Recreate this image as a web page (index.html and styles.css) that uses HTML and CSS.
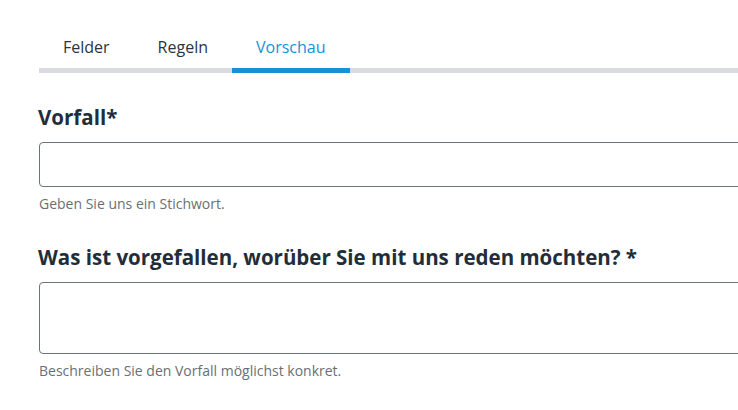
FILE: index.html
```html
<!DOCTYPE html>
<html lang="de">
<head>
    <meta charset="UTF-8">
    <meta name="viewport" content="width=device-width, initial-scale=1.0">
    <title>Formular Vorschau</title>
    <link rel="stylesheet" href="styles.css">
</head>
<body>
    <div class="page">
        <nav class="tabs">
            <a class="tab" href="#">Felder</a>
            <a class="tab" href="#">Regeln</a>
            <a class="tab active" href="#">Vorschau</a>
        </nav>

        <form class="preview">
            <div class="field">
                <label for="vorfall">Vorfall*</label>
                <input type="text" id="vorfall" name="vorfall">
                <p class="help">Geben Sie uns ein Stichwort.</p>
            </div>

            <div class="field">
                <label for="beschreibung">Was ist vorgefallen, worüber Sie mit uns reden möchten? *</label>
                <textarea id="beschreibung" name="beschreibung"></textarea>
                <p class="help">Beschreiben Sie den Vorfall möglichst konkret.</p>
            </div>
        </form>
    </div>
</body>
</html>
```

FILE: styles.css
```css
html, body {
    margin: 0;
    overflow: hidden;
}
body {
    font-family: "Open Sans", sans-serif;
    background: #fff;
    color: #222d3a;
}
.page {
    width: 760px;
    padding: 26px 0 0 39px;
}
.tabs {
    display: flex;
    border-bottom: 5px solid #d8dce0;
}
.tab {
    display: block;
    padding: 10px 24px 10px;
    margin-bottom: -5px;
    border-bottom: 5px solid transparent;
    font-size: 16px;
    line-height: 22px;
    color: #2b3440;
    text-decoration: none;
}
.tab.active {
    color: #1592d6;
    border-bottom-color: #1592d6;
}
.preview {
    padding-top: 31px;
}
.field {
    margin-bottom: 31px;
}
label {
    display: block;
    font-size: 20.5px;
    font-weight: 700;
    line-height: 26px;
    margin-left: -1px;
    margin-bottom: 12px;
}
input, textarea {
    display: block;
    box-sizing: border-box;
    width: 100%;
    border: 1px solid #6b7379;
    border-radius: 4px;
    background: #fff;
    font: inherit;
    resize: none;
}
input {
    height: 45px;
}
textarea {
    height: 72px;
}
.help {
    margin: 8px 0 0;
    font-size: 14px;
    line-height: 18px;
    color: #6a6f75;
}
```
